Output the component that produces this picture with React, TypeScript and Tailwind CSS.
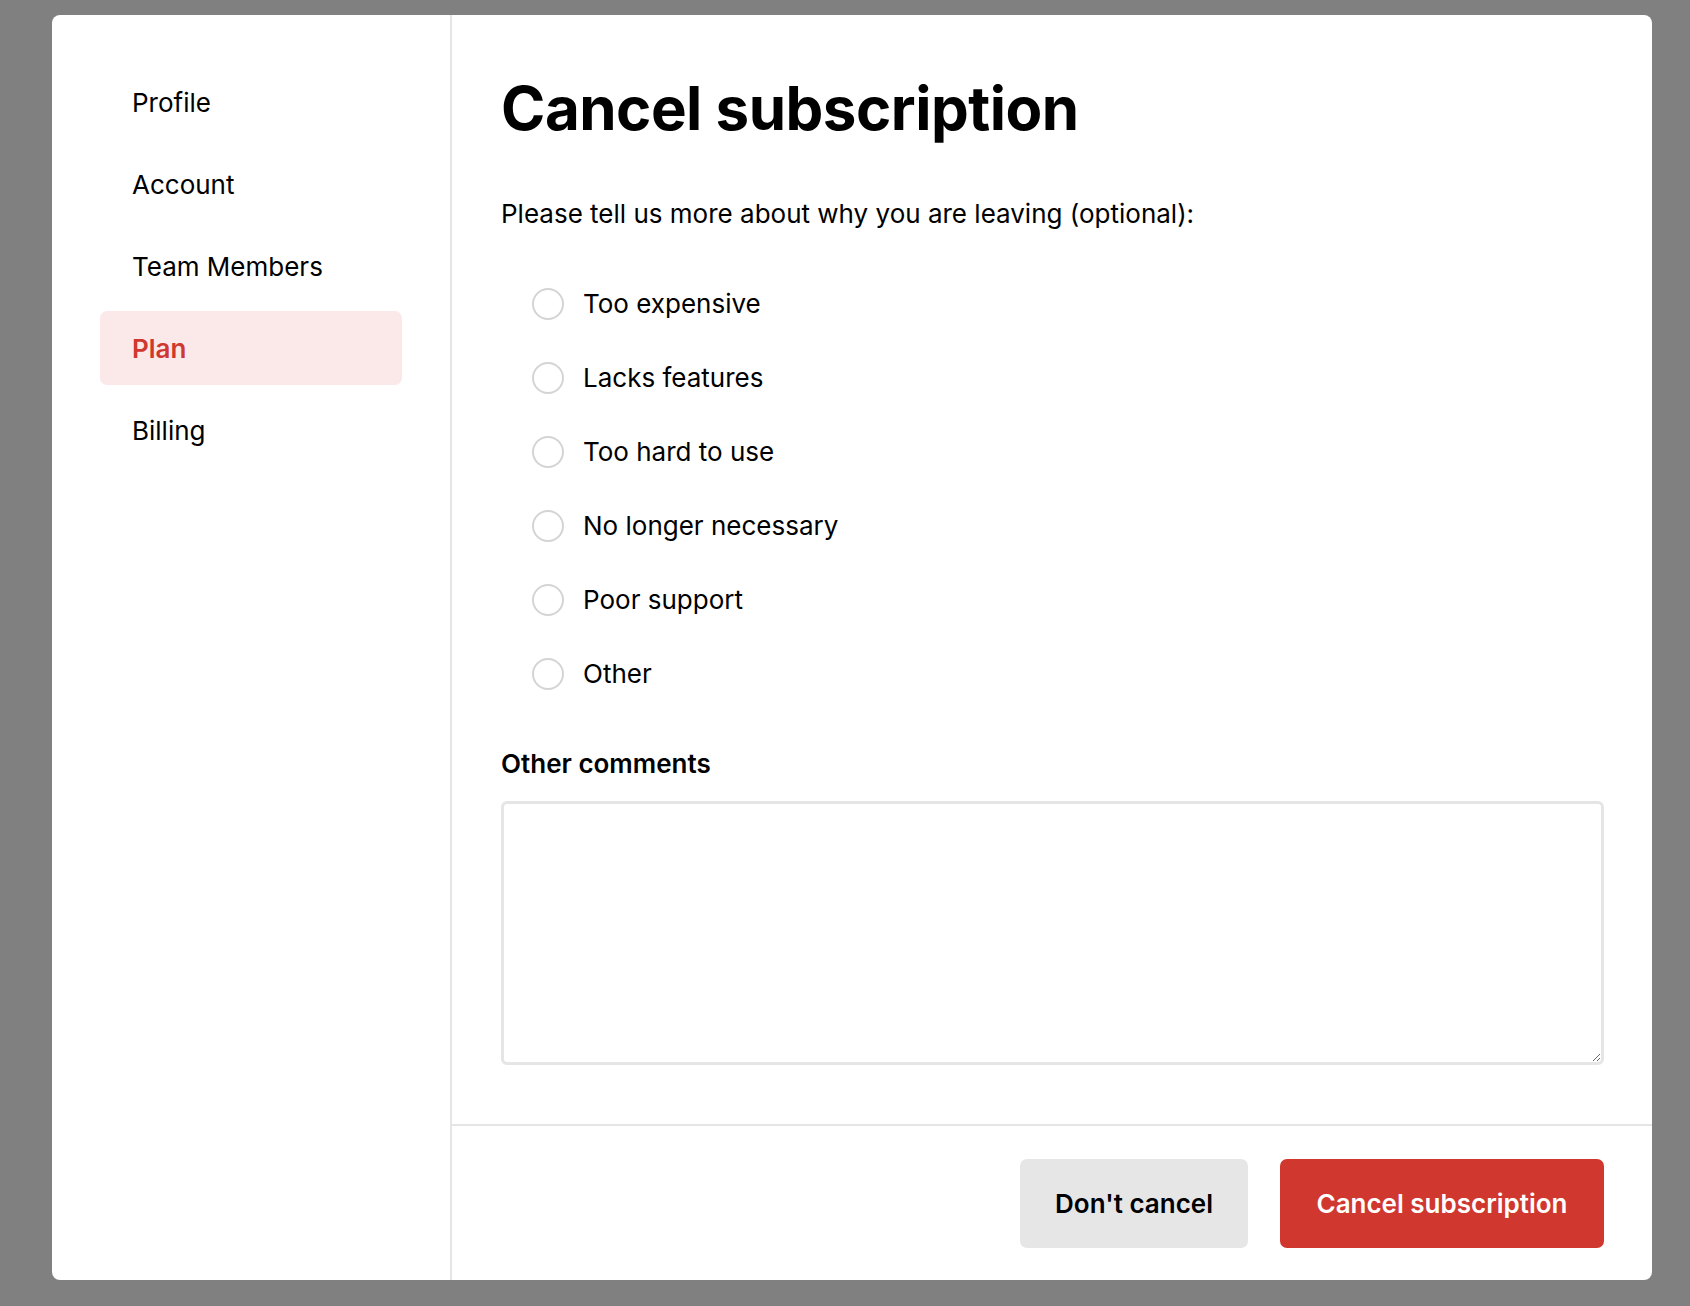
import React from "react";

const navItems = ["Profile", "Account", "Team Members", "Plan", "Billing"];
const reasons = [
  "Too expensive",
  "Lacks features",
  "Too hard to use",
  "No longer necessary",
  "Poor support",
  "Other",
];

export default function App() {
  return (
    <div
      className="w-[1690px] h-[1306px] bg-[#808080] pt-[15px] pl-[52px] pr-[38px] pb-[26px] text-black"
      style={{ fontFamily: "Inter, 'Liberation Sans', sans-serif" }}
    >
      <div className="w-full h-full bg-white rounded-[8px] flex overflow-hidden">
        <aside className="w-[400px] shrink-0 border-r-2 border-[#e5e5e5] pt-[50px] px-[48px]">
          <nav className="flex flex-col gap-[8px]">
            {navItems.map((item) => {
              const active = item === "Plan";
              return (
                <div
                  key={item}
                  className={
                    active
                      ? "h-[74px] w-[302px] rounded-[7px] bg-[#fbe9e9] pl-[32px] flex items-center text-[26px] font-semibold text-[#d0372e]"
                      : "h-[74px] w-[302px] rounded-[7px] pl-[32px] flex items-center text-[26px]"
                  }
                >
                  {item}
                </div>
              );
            })}
          </nav>
        </aside>
        <main className="flex-1 flex flex-col">
          <div className="flex-1 pl-[49px] pr-[48px] pt-[57px]">
            <h1 className="text-[60px] font-bold leading-[72px] tracking-[-0.5px]">
              Cancel subscription
            </h1>
            <p className="mt-[53px] text-[26px] leading-[34px]">
              Please tell us more about why you are leaving (optional):
            </p>
            <div className="mt-[56px] pl-[31px] flex flex-col gap-[40px]">
              {reasons.map((r) => (
                <label key={r} className="flex items-center gap-[19px] h-[34px]">
                  <span className="w-[32px] h-[32px] rounded-full border-2 border-[#d4d4d4] shrink-0" />
                  <span className="text-[26px] leading-[34px]">{r}</span>
                </label>
              ))}
            </div>
            <div className="mt-[56px] text-[26px] font-semibold leading-[34px]">
              Other comments
            </div>
            <textarea className="mt-[20px] block w-full h-[264px] rounded-[6px] border-[3px] border-[#e5e5e5] outline-none resize-y" />
          </div>
          <footer className="border-t-2 border-[#e5e5e5] flex justify-end gap-[32px] pt-[33px] pb-[32px] pr-[48px]">
            <button className="w-[228px] h-[89px] rounded-[7px] bg-[#e6e6e6] text-[26px] font-semibold text-black">
              Don't cancel
            </button>
            <button className="w-[324px] h-[89px] rounded-[7px] bg-[#d0372e] text-[26px] font-semibold text-white">
              Cancel subscription
            </button>
          </footer>
        </main>
      </div>
    </div>
  );
}
